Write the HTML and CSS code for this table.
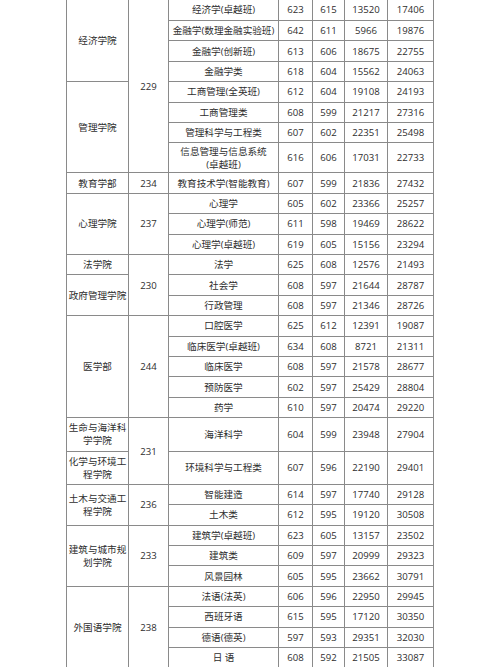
FILE: index.html
```html
<!DOCTYPE html>
<html lang="zh-CN">
<head>
<meta charset="utf-8">
<title>录取分数</title>
<link rel="stylesheet" href="styles.css">
</head>
<body>
<div class="page">
<table class="scores">
<colgroup>
<col class="c-school"><col class="c-line"><col class="c-major"><col class="c-n1"><col class="c-n2"><col class="c-n3"><col class="c-n4">
</colgroup>
<tbody>
<tr class="r"><td rowspan="4">经济学院</td><td rowspan="8">229</td><td>经济学(卓越班)</td><td>623</td><td>615</td><td>13520</td><td>17406</td></tr>
<tr class="r"><td>金融学(数理金融实验班)</td><td>642</td><td>611</td><td>5966</td><td>19876</td></tr>
<tr class="r"><td>金融学(创新班)</td><td>613</td><td>606</td><td>18675</td><td>22755</td></tr>
<tr class="r"><td>金融学类</td><td>618</td><td>604</td><td>15562</td><td>24063</td></tr>
<tr class="r"><td rowspan="4">管理学院</td><td>工商管理(全英班)</td><td>612</td><td>604</td><td>19108</td><td>24193</td></tr>
<tr class="r"><td>工商管理类</td><td>608</td><td>599</td><td>21217</td><td>27316</td></tr>
<tr class="r"><td>管理科学与工程类</td><td>607</td><td>602</td><td>22351</td><td>25498</td></tr>
<tr class="r2"><td class="two">信息管理与信息系统<br>(卓越班)</td><td>616</td><td>606</td><td>17031</td><td>22733</td></tr>
<tr class="r"><td>教育学部</td><td>234</td><td>教育技术学(智能教育)</td><td>607</td><td>599</td><td>21836</td><td>27432</td></tr>
<tr class="r"><td rowspan="3">心理学院</td><td rowspan="3">237</td><td>心理学</td><td>605</td><td>602</td><td>23366</td><td>25257</td></tr>
<tr class="r"><td>心理学(师范)</td><td>611</td><td>598</td><td>19469</td><td>28622</td></tr>
<tr class="r"><td>心理学(卓越班)</td><td>619</td><td>605</td><td>15156</td><td>23294</td></tr>
<tr class="r"><td>法学院</td><td rowspan="3">230</td><td>法学</td><td>625</td><td>608</td><td>12576</td><td>21493</td></tr>
<tr class="r"><td rowspan="2">政府管理学院</td><td>社会学</td><td>608</td><td>597</td><td>21644</td><td>28787</td></tr>
<tr class="r"><td>行政管理</td><td>608</td><td>597</td><td>21346</td><td>28726</td></tr>
<tr class="r"><td rowspan="5">医学部</td><td rowspan="5">244</td><td>口腔医学</td><td>625</td><td>612</td><td>12391</td><td>19087</td></tr>
<tr class="r"><td>临床医学(卓越班)</td><td>634</td><td>608</td><td>8721</td><td>21311</td></tr>
<tr class="r"><td>临床医学</td><td>608</td><td>597</td><td>21578</td><td>28677</td></tr>
<tr class="r"><td>预防医学</td><td>602</td><td>597</td><td>25429</td><td>28804</td></tr>
<tr class="r"><td>药学</td><td>610</td><td>597</td><td>20474</td><td>29220</td></tr>
<tr class="r3"><td class="two">生命与海洋科<br>学学院</td><td rowspan="2">231</td><td>海洋科学</td><td>604</td><td>599</td><td>23948</td><td>27904</td></tr>
<tr class="r3"><td class="two">化学与环境工<br>程学院</td><td>环境科学与工程类</td><td>607</td><td>596</td><td>22190</td><td>29401</td></tr>
<tr class="r"><td rowspan="2" class="two">土木与交通工<br>程学院</td><td rowspan="2">236</td><td>智能建造</td><td>614</td><td>597</td><td>17740</td><td>29128</td></tr>
<tr class="r"><td>土木类</td><td>612</td><td>595</td><td>19120</td><td>30508</td></tr>
<tr class="r"><td rowspan="3" class="two">建筑与城市规<br>划学院</td><td rowspan="3">233</td><td>建筑学(卓越班)</td><td>623</td><td>605</td><td>13157</td><td>23502</td></tr>
<tr class="r"><td>建筑类</td><td>609</td><td>597</td><td>20999</td><td>29323</td></tr>
<tr class="r"><td>风景园林</td><td>605</td><td>595</td><td>23662</td><td>30791</td></tr>
<tr class="r"><td rowspan="4">外国语学院</td><td rowspan="4">238</td><td>法语(法英)</td><td>606</td><td>596</td><td>22950</td><td>29945</td></tr>
<tr class="r"><td>西班牙语</td><td>615</td><td>595</td><td>17120</td><td>30350</td></tr>
<tr class="r"><td>德语(德英)</td><td>597</td><td>593</td><td>29351</td><td>32030</td></tr>
<tr class="r"><td>日 语</td><td>608</td><td>592</td><td>21505</td><td>33087</td></tr>
</tbody>
</table>
</div>
</body>
</html>
```
FILE: styles.css
```css
html, body {
  margin: 0;
  padding: 0;
  background: #ffffff;
}
.page {
  padding-left: 66px;
}
.scores {
  border-collapse: collapse;
  table-layout: fixed;
  width: 368px;
  font-family: "Open Sans", "Noto Sans CJK SC", sans-serif;
  font-size: 9.6px;
  color: #2e2e2e;
}
.c-school { width: 62px; }
.c-line { width: 40px; }
.c-major { width: 110px; }
.c-n1 { width: 34px; }
.c-n2 { width: 32px; }
.c-n3 { width: 43px; }
.c-n4 { width: 46px; }
.scores td {
  border: 1px solid #8a8a8a;
  padding: 0;
  text-align: center;
  vertical-align: middle;
  line-height: 13px;
  white-space: nowrap;
}
.scores tr:first-child td {
  border-top: none;
}
.r { height: 20.42px; }
.r2 { height: 30px; }
.r3 { height: 33.3px; }
.two { line-height: 13px; }
```
